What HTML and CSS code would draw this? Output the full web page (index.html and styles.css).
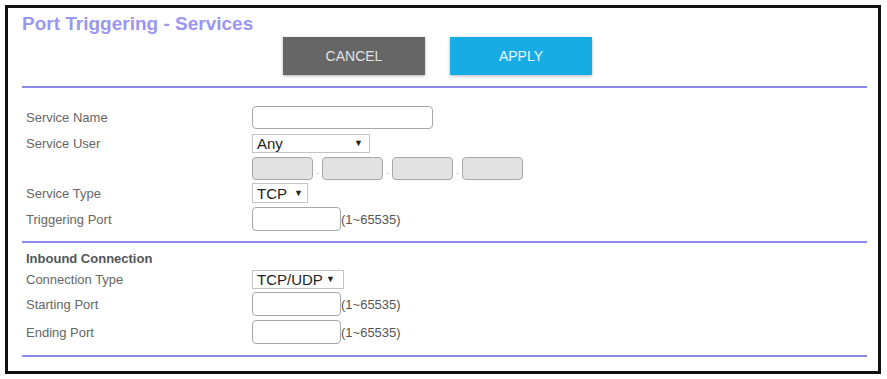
FILE: index.html
```html
<!DOCTYPE html>
<html lang="en">
<head>
    <meta charset="UTF-8">
    <title>Port Triggering - Services</title>
    <link rel="stylesheet" href="styles.css">
</head>
<body>
    <div class="panel">
        <!-- Title and actions -->
        <div class="page-header">
            <h1>Port Triggering - Services</h1>
            <div class="actions">
                <button class="btn btn-cancel">CANCEL</button>
                <button class="btn btn-apply">APPLY</button>
            </div>
        </div>

        <!-- Service settings -->
        <div class="section section-service">
            <div class="row">
                <label class="label">Service Name</label>
                <input type="text" class="field field-name">
            </div>
            <div class="row">
                <label class="label">Service User</label>
                <div class="select-wrap select-any">
                    <select class="select"><option>Any</option></select>
                </div>
            </div>
            <div class="row row-ip">
                <span class="label"></span>
                <div class="ip-group">
                    <input type="text" class="ip-box" disabled>
                    <span class="ip-dot">.</span>
                    <input type="text" class="ip-box" disabled>
                    <span class="ip-dot">.</span>
                    <input type="text" class="ip-box" disabled>
                    <span class="ip-dot">.</span>
                    <input type="text" class="ip-box" disabled>
                </div>
            </div>
            <div class="row">
                <label class="label">Service Type</label>
                <div class="select-wrap select-tcp">
                    <select class="select"><option>TCP</option></select>
                </div>
            </div>
            <div class="row">
                <label class="label">Triggering Port</label>
                <input type="text" class="field field-port">
                <span class="range">(1~65535)</span>
            </div>
        </div>

        <!-- Inbound connection -->
        <div class="section section-inbound">
            <div class="row row-title">
                <span class="label label-bold">Inbound Connection</span>
            </div>
            <div class="row row-select">
                <label class="label">Connection Type</label>
                <div class="select-wrap select-tcpudp">
                    <select class="select"><option>TCP/UDP</option></select>
                </div>
            </div>
            <div class="row row-port">
                <label class="label">Starting Port</label>
                <input type="text" class="field field-port">
                <span class="range">(1~65535)</span>
            </div>
            <div class="row row-port">
                <label class="label">Ending Port</label>
                <input type="text" class="field field-port">
                <span class="range">(1~65535)</span>
            </div>
        </div>
    </div>
</body>
</html>
```

FILE: styles.css
```css
* {
    margin: 0;
    padding: 0;
    box-sizing: border-box;
}

body {
    font-family: "Liberation Sans", Arial, sans-serif;
    background: #ffffff;
    color: #666666;
}

/* Outer frame */
.panel {
    width: 876px;
    height: 369px;
    margin: 5px 0 0 5px;
    border: 3px solid #111111;
    padding: 0 11px 0 14px;
}

.page-header {
    padding: 5px 0 11px;
    border-bottom: 2px solid #8d89e8;
}

.page-header h1 {
    font-size: 19px;
    line-height: 22px;
    font-weight: 700;
    color: #9a97ef;
}

.actions {
    display: flex;
    gap: 25px;
    margin-top: 2px;
    padding-left: 261px;
}

.btn {
    width: 142px;
    height: 38px;
    border: none;
    font-family: "Liberation Sans", Arial, sans-serif;
    font-size: 14px;
    cursor: pointer;
    box-shadow: 0 1px 3px rgba(0, 0, 0, 0.3);
}

.btn-cancel {
    background: #666666;
    color: #e2e2e2;
}

.btn-apply {
    background: #18ace4;
    color: #eef8fd;
}

/* Form sections */
.section {
    border-bottom: 2px solid #8d89e8;
}

.section-service {
    padding: 16px 0 9px;
}

.section-inbound {
    padding: 5px 0 9px;
}

.row {
    display: flex;
    align-items: center;
    height: 26px;
}

.row-ip {
    height: 24px;
}

.row-title {
    height: 20px;
}

.row-select {
    height: 22px;
}

.row-port {
    height: 28px;
}

.label {
    width: 230px;
    padding-left: 4px;
    font-size: 13px;
    color: #666666;
}

.label-bold {
    font-weight: 700;
    color: #555555;
}

.field {
    height: 23px;
    border: 1px solid #a8a8a8;
    border-radius: 4px;
    background: #ffffff;
    font-family: "Liberation Sans", Arial, sans-serif;
    font-size: 14px;
    padding: 0 4px;
}

.field-name {
    width: 181px;
}

.field-port {
    width: 89px;
    height: 24px;
}

.range {
    font-size: 13px;
    color: #555555;
}

/* Fake native selects */
.select-wrap {
    position: relative;
    display: inline-block;
}

.select-wrap::after {
    content: "\25BC";
    position: absolute;
    top: 50%;
    transform: translateY(-50%);
    font-size: 9px;
    color: #222222;
    pointer-events: none;
}

.select {
    appearance: none;
    -webkit-appearance: none;
    width: 100%;
    height: 19px;
    border: 1px solid #c4c4c4;
    border-radius: 0;
    background: #ffffff;
    font-family: "Liberation Sans", Arial, sans-serif;
    font-size: 15px;
    line-height: 17px;
    color: #222222;
    padding: 0 0 0 4px;
}

.select-any {
    width: 118px;
}

.select-any::after {
    right: 7px;
}

.select-tcp {
    width: 56px;
}

.select-tcp .select {
    height: 20px;
}

.select-tcp::after {
    right: 5px;
}

.select-tcpudp {
    width: 92px;
}

.select-tcpudp::after {
    right: 9px;
}

/* IP address boxes */
.ip-group {
    display: flex;
    align-items: flex-end;
}

.ip-box {
    width: 61px;
    height: 23px;
    border: 1px solid #a8a8a8;
    border-radius: 4px;
    background: #e2e2e2;
}

.ip-dot {
    width: 9px;
    text-align: center;
    font-size: 10px;
    line-height: 10px;
    color: #aaaaaa;
    padding-bottom: 4px;
}
```
